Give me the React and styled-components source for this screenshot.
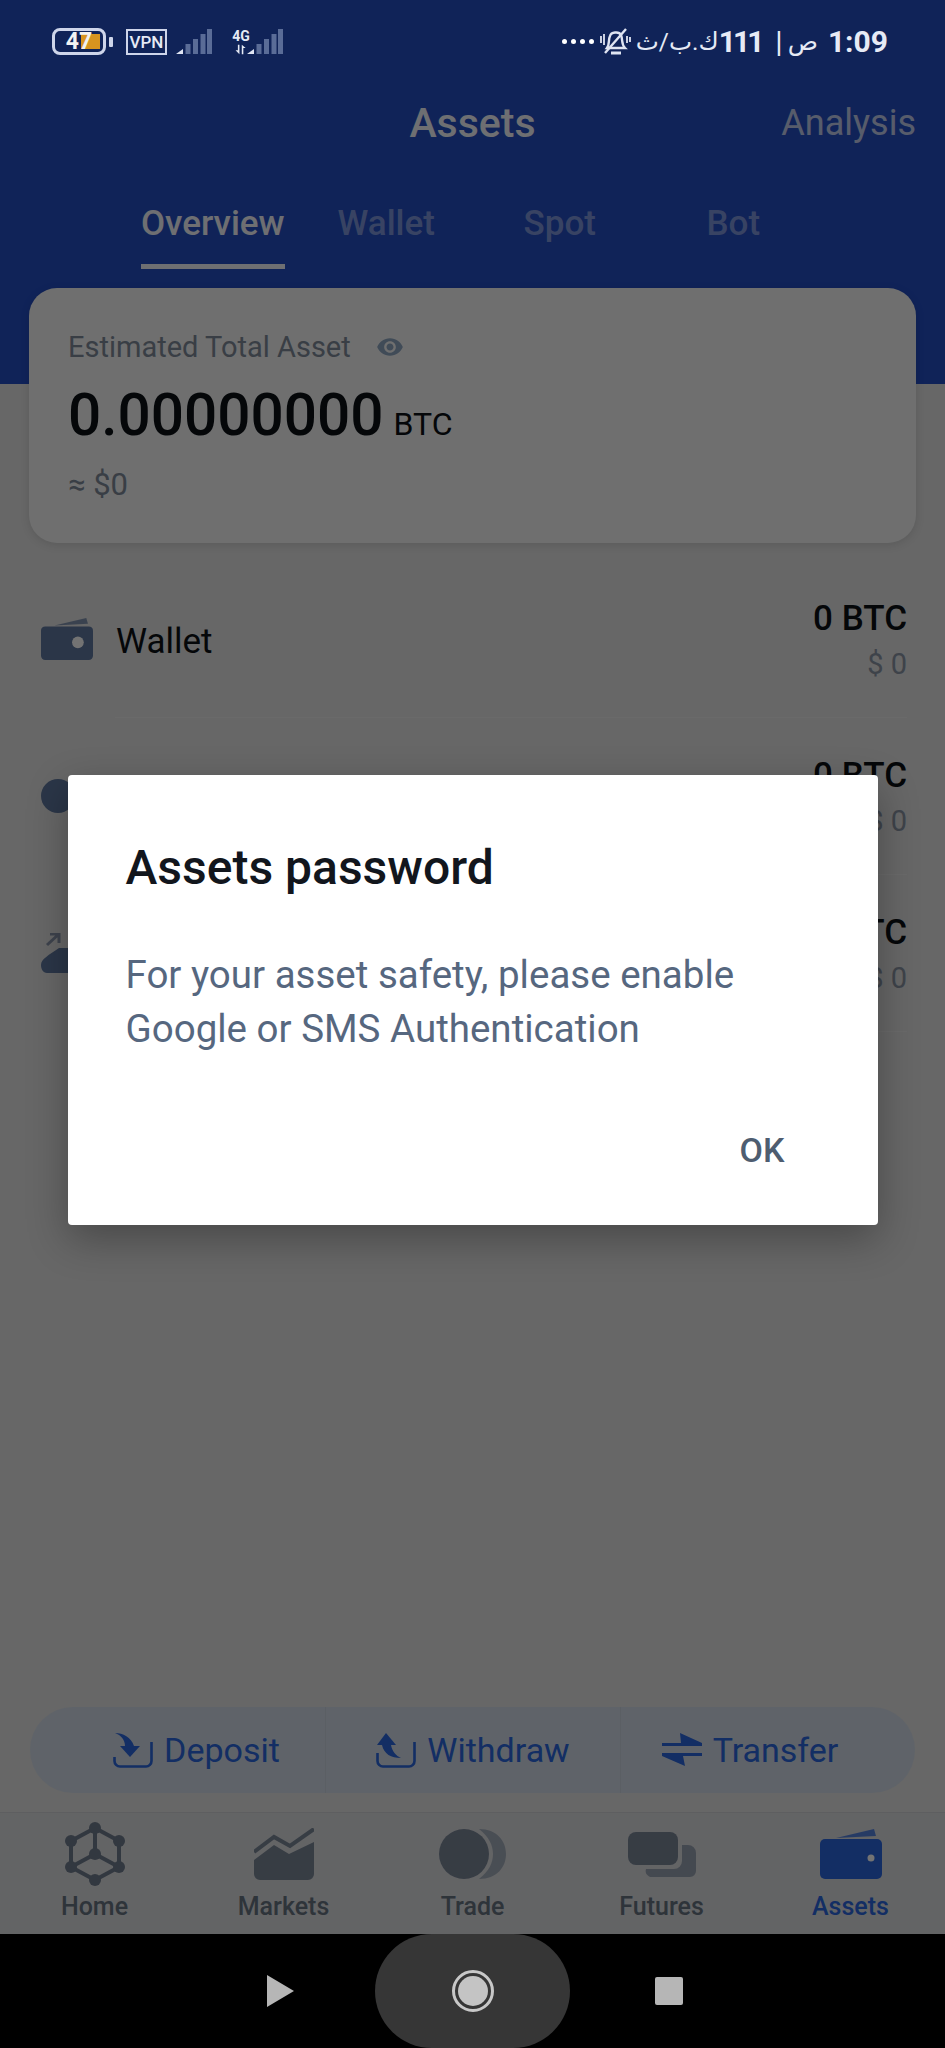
import styled, { createGlobalStyle } from 'styled-components'

const GlobalStyle = createGlobalStyle`
html, body {
    margin: 0;
    padding: 0;
    background: #000;
}
* {
    box-sizing: border-box;
}
body {
    font-family: Roboto, "Noto Sans", "DejaVu Sans", sans-serif;
}
`

const Page = styled.div`
width: 945px;
height: 2048px;
display: flex;
flex-direction: column;
overflow: hidden;
`

const Screen = styled.div`
position: relative;
height: 1934px;
display: flex;
flex-direction: column;
background: #e4e4e4;
`

const Header = styled.header`
height: 384px;
background: #244ec4;
padding: 28px 30px 0 52px;
`

const StatusBar = styled.div`
position: relative;
z-index: 2;
height: 27px;
display: flex;
justify-content: space-between;
align-items: center;
color: #e6eaf5;
`

const StatusLeft = styled.div`
display: flex;
align-items: center;
`

const StatusRight = styled.div`
display: flex;
align-items: center;
margin-right: 27px;
`

const Battery = styled.div`
position: relative;
width: 54px;
height: 27px;
border: 3px solid #ced5ea;
border-radius: 8px;
display: flex;
justify-content: center;
align-items: center;
font-size: 23px;
font-weight: 700;
color: #f2f2f2;

span {
    position: relative;
}
`

const BatteryFill = styled.div`
position: absolute;
top: 3px;
bottom: 3px;
left: 26px;
right: 3px;
background: #d8941f;
`

const BatteryCap = styled.div`
width: 4px;
height: 10px;
margin: 0 13px 0 3px;
background: #ced5ea;
border-radius: 1px;
`

const VpnBox = styled.div`
width: 41px;
height: 26px;
border: 2px solid #ced5ea;
display: flex;
justify-content: center;
align-items: center;
font-size: 17px;
font-weight: 500;
margin-right: 9px;
`

const NetStack = styled.div`
width: 26px;
margin-left: 16px;
display: flex;
flex-direction: column;
align-items: center;
font-size: 14px;
font-weight: 700;
line-height: 15px;
`

const SecondSignal = styled.div`
display: flex;
margin-left: -7px;
`

const TimeText = styled.span`
font-size: ${props => props.$size || 30}px;
font-weight: ${props => (props.$bold ? 700 : 400)};
letter-spacing: ${props => props.$tight || 0}px;
line-height: 36px;
margin-left: ${props => props.$gap || 0}px;
`

const Dots = styled.div`
display: flex;
gap: 4px;
margin-right: 5px;
`

const Dot = styled.i`
width: 5px;
height: 5px;
border-radius: 50%;
background: #fff;
`

const TitleRow = styled.div`
height: 60px;
margin: 38px -30px 0 -52px;
display: grid;
grid-template-columns: 1fr auto 1fr;
align-items: center;
`

const Title = styled.h1`
grid-column: 2;
margin: 0;
font-size: 41px;
font-weight: 500;
color: #fff;
opacity: 0.95;
`

const Analysis = styled.span`
justify-self: end;
margin-right: 29px;
font-size: 36px;
color: #fff;
opacity: 0.72;
`

const Tabs = styled.nav`
display: grid;
grid-template-columns: repeat(4, 173.5px);
margin: 50px 0 0 74px;
`

const Tab = styled.div`
display: flex;
flex-direction: column;
align-items: center;
font-size: 35px;
font-weight: 500;
line-height: 42px;
color: ${props => (props.$active ? '#fff' : 'rgba(255,255,255,.42)')};
opacity: ${props => (props.$active ? 0.95 : 1)};

span {
    padding-bottom: 19px;
    border-bottom: ${props => (props.$active ? '5px solid #fff' : '5px solid transparent')};
}
`

const SummaryCard = styled.section`
position: relative;
height: 255px;
margin: -96px 29px 0;
padding: 41px 39px 0;
background: #f5f6f6;
border-radius: 28px;
box-shadow: 0 2px 10px rgba(0,0,0,.12);
`

const SummaryLabel = styled.div`
display: flex;
align-items: center;
gap: 25px;
font-size: 29px;
line-height: 36px;
color: #7f8b9a;
`

const TotalLine = styled.div`
display: flex;
align-items: baseline;
gap: 10px;
margin-top: 15px;
color: #0c1016;
font-size: 32px;
line-height: 70px;

b {
    font-size: 58.5px;
    font-weight: 500;
}
`

const Approx = styled.div`
margin-top: 8px;
font-size: 31px;
line-height: 36px;
color: #7f8b9a;
`

const Rows = styled.div`
margin-top: 18px;
padding: 0 38px 0 41px;
`

const AssetRow = styled.div`
height: 156px;
display: flex;
align-items: center;
position: relative;
`

const RowIcon = styled.div`
width: 75px;
display: flex;
`

const RowName = styled.span`
position: relative;
top: 2px;
font-size: 35px;
color: #0c1016;
`

const RowValues = styled.div`
margin-left: auto;
padding-top: 3px;
text-align: right;
`

const RowAmount = styled.div`
font-size: 35px;
font-weight: 500;
line-height: 40px;
color: #0c1016;
`

const RowUsd = styled.div`
margin-top: 6px;
font-size: 29px;
line-height: 38px;
color: #8b95a4;
`

const RowDivider = styled.div`
height: 1px;
margin-left: 74px;
background: #ececec;
`

const ActionBar = styled.div`
margin: auto 30px 19px;
height: 86px;
display: grid;
grid-template-columns: repeat(3, 1fr);
background: #d3dce8;
border-radius: 43px;
`

const ActionButton = styled.div`
display: flex;
align-items: center;
justify-content: center;
gap: 11px;
padding: 0 ${props => props.$padRight || 0}px 0 ${props => props.$padLeft || 0}px;
font-size: 34px;
color: #2a66dd;

& + & {
    border-left: 1px solid #c9d2de;
}
`

const TabBar = styled.nav`
height: 122px;
display: grid;
grid-template-columns: repeat(5, 1fr);
background: #dcdde0;
border-top: 1px solid #d0d1d4;
`

const TabItem = styled.div`
display: flex;
flex-direction: column;
align-items: center;
justify-content: flex-end;
padding-bottom: 12px;
font-size: 25px;
font-weight: 500;
line-height: 30px;
color: ${props => (props.$active ? '#2a66dd' : '#677382')};
`

const TabIcon = styled.div`
height: 70px;
margin-bottom: 3px;
display: flex;
align-items: center;
`

const Overlay = styled.div`
position: absolute;
inset: 0;
z-index: 1;
padding-top: 775px;
display: flex;
justify-content: center;
align-items: flex-start;
background: rgba(0,0,0,.55);
`

const Dialog = styled.div`
width: 810px;
height: 450px;
padding: 65px 58px 0;
display: flex;
flex-direction: column;
background: #fff;
border-radius: 4px;
box-shadow: 0 14px 40px rgba(0,0,0,.3);
`

const DialogTitle = styled.h2`
margin: 0;
font-size: 48px;
font-weight: 500;
line-height: 56px;
color: #12161d;
`

const DialogBody = styled.p`
margin: 52px 0 0;
font-size: 38.5px;
line-height: 54px;
color: #56677f;
`

const DialogAction = styled.div`
margin-top: auto;
margin-bottom: 55px;
align-self: flex-end;
margin-right: 35px;
font-size: 34px;
font-weight: 500;
line-height: 40px;
color: #4e5d70;
`

const NavBar = styled.div`
flex: 1;
display: flex;
align-items: center;
padding-left: 267px;
background: #000;
`

const HomePill = styled.div`
width: 195px;
height: 114px;
margin: 0 85px 0 81px;
display: flex;
justify-content: center;
align-items: center;
background: #363636;
border-radius: 57px;
`

const BackButton = styled.div`
width: 0;
height: 0;
border-left: 27px solid #b6b6b6;
border-top: 16px solid transparent;
border-bottom: 16px solid transparent;
`

const HomeRing = styled.div`
width: 42px;
height: 42px;
border: 3px solid #c8c8c8;
border-radius: 50%;
padding: 3px;

&::after {
    content: '';
    display: block;
    width: 100%;
    height: 100%;
    border-radius: 50%;
    background: #c4c4c4;
}
`

const RecentButton = styled.div`
width: 28px;
height: 28px;
background: #b6b6b6;
border-radius: 2px;
`

function SignalBars() {
    return (
        <svg width="36" height="26" viewBox="0 0 36 26">
            <path d="M0 25 L7 20 V25 Z" fill="#dfe4f2" />
            <g fill="#5a6c97">
                <rect x="9.5" y="15" width="5" height="10" />
                <rect x="17" y="10" width="5" height="15" />
                <rect x="24.5" y="5" width="5" height="20" />
                <rect x="31" y="0" width="5" height="25" />
            </g>
        </svg>
    )
}

function DataArrows() {
    return (
        <svg width="14" height="11" viewBox="0 0 18 12" fill="#e6eaf5">
            <path d="M5 0 H7 V12 L2 7 H5 Z" />
            <path d="M10 12 H12 V4 H15 L10 0 Z" />
        </svg>
    )
}

function MutedBell() {
    return (
        <svg width="32" height="28" viewBox="0 0 32 28" fill="none" stroke="#dfe4f2" strokeWidth="2.4">
            <path d="M8 20 C11 16 9 12 11 8 C12 4 20 3 22 7 C24 12 22 16 26 20 Z" />
            <path d="M12 25 H22" strokeWidth="3" />
            <path d="M27 1 L6 25" />
            <path d="M2 8 V15 M5 6 V17 M28 8 V15 M31 9 V14" strokeWidth="1.8" />
        </svg>
    )
}

function WalletIcon({ width = 52, color = '#60789f', holeX = 44, holeR = 7 }) {
    return (
        <svg width={width} viewBox="0 0 62 50">
            <path d="M16 9 L54 0 L56 7 Z" fill={color} opacity="0.75" />
            <rect x="0" y="10" width="62" height="40" rx="5" fill={color} />
            <circle cx={holeX} cy="29" r={holeR} fill="#fff" />
        </svg>
    )
}

function EyeIcon() {
    return (
        <svg width="28" height="28" viewBox="0 0 24 24" fill="#8fa6c2">
            <path d="M12 4.5C7 4.5 2.73 7.61 1 12c1.73 4.39 6 7.5 11 7.5s9.27-3.11 11-7.5c-1.73-4.39-6-7.5-11-7.5zM12 17c-2.76 0-5-2.24-5-5s2.24-5 5-5 5 2.24 5 5-2.24 5-5 5zm0-8c-1.66 0-3 1.34-3 3s1.34 3 3 3 3-1.34 3-3-1.34-3-3-3z" />
        </svg>
    )
}

function CloudIcon() {
    return (
        <svg width="52" height="40" viewBox="0 0 52 40" fill="none">
            <path d="M6 12 L18 1 M9 1 H18 V10" stroke="#8a96ac" strokeWidth="3" />
            <path d="M0 32 C0 26 8 22 18 15 L34 15 L52 32 V40 H6 C2 40 0 36 0 32 Z" fill="#60789f" />
        </svg>
    )
}

function DepositIcon() {
    return (
        <svg width="40" height="36" viewBox="0 0 40 36" fill="#2a66dd">
            <path d="M1.5 25 V29 a5.5 5.5 0 0 0 5.5 5.5 H33 a5.5 5.5 0 0 0 5.5 -5.5 V10" fill="none" stroke="#2a66dd" strokeWidth="2.6" />
            <path d="M2 1 C10 1 18 5 21 14 L12 14 C12 8 8 3 2 1 Z" />
            <path d="M7 14 H27 L17 25 Z" />
        </svg>
    )
}

function WithdrawIcon() {
    return (
        <svg width="40" height="36" viewBox="0 0 40 36" fill="#2a66dd">
            <path d="M1.5 21 V29 a5.5 5.5 0 0 0 5.5 5.5 H33 a5.5 5.5 0 0 0 5.5 -5.5 V10" fill="none" stroke="#2a66dd" strokeWidth="2.6" />
            <path d="M10 1 L20 13 H1 Z" />
            <path d="M6 13 H15 C16 19 20 24 25 26 C15 26 8 22 6 13 Z" />
        </svg>
    )
}

function TransferIcon() {
    return (
        <svg width="40" height="34" viewBox="0 0 40 34" fill="#2a66dd">
            <path d="M0 10 H19 L18 0 L40 10 V13 H0 Z" />
            <path d="M0 20 H40 V23 H21 L23 33 L0 23 Z" />
        </svg>
    )
}

function HomeIcon() {
    const nodes = [[30, 6], [6, 19], [54, 19], [6, 45], [54, 45], [30, 58], [30, 32]]
    return (
        <svg width="60" height="64" viewBox="0 0 60 64" fill="#6f7c8e" stroke="#6f7c8e">
            <path d="M30 6 L54 19 V45 L30 58 L6 45 V19 Z M30 6 V32 L6 45 M30 32 L54 45" fill="none" strokeWidth="4" />
            {nodes.map(([cx, cy]) => (
                <circle key={`${cx}-${cy}`} cx={cx} cy={cy} r="6" strokeWidth="0" />
            ))}
        </svg>
    )
}

function MarketsIcon() {
    return (
        <svg width="60" height="52" viewBox="0 0 60 52" fill="#7a8798">
            <path d="M0 32 L20 17 L35 26 L60 14 V46 a6 6 0 0 1 -6 6 H6 a6 6 0 0 1 -6 -6 Z" />
            <path d="M0 24 L20 9 L36 18 L60 1" fill="none" stroke="#7a8798" strokeWidth="4" />
        </svg>
    )
}

function TradeIcon({ height = 50, main = '#7a8798', side = '#a3adbb' }) {
    return (
        <svg height={height} viewBox="0 0 67 50">
            <circle cx="25" cy="25" r="25" fill={main} />
            <path d="M40 0 C58 0 67 12 67 25 C67 38 58 50 40 50 C50 42 54 34 54 25 C54 16 50 8 40 0 Z" fill={side} />
        </svg>
    )
}

function FuturesIcon() {
    return (
        <svg width="68" height="47" viewBox="0 0 68 47" fill="#7a8798">
            <rect x="0" y="1" width="50" height="33" rx="8" />
            <path d="M54 14 H60 a8 8 0 0 1 8 8 V40 a6 6 0 0 1 -6 6 H24 a6 6 0 0 1 -6 -8 H46 a8 8 0 0 0 8 -8 Z" fill="#97a2b2" />
        </svg>
    )
}

const assetRows = [
    { name: 'Wallet', Icon: WalletIcon },
    { name: 'Spot', Icon: () => <TradeIcon height={34} main="#60789f" side="#60789f" /> },
    { name: 'Bot', Icon: CloudIcon },
]

const bottomTabs = [
    { label: 'Home', Icon: HomeIcon },
    { label: 'Markets', Icon: MarketsIcon },
    { label: 'Trade', Icon: TradeIcon },
    { label: 'Futures', Icon: FuturesIcon },
    { label: 'Assets', Icon: () => <WalletIcon width={62} color="#2a66dd" holeX={51} holeR={3.5} />, active: true },
]

export default function App() {
    return (
        <Page>
            <GlobalStyle />
            <Screen>
                <Header>
                    <StatusBar>
                        <StatusLeft>
                            <Battery>
                                <BatteryFill />
                                <span>47</span>
                            </Battery>
                            <BatteryCap />
                            <VpnBox>VPN</VpnBox>
                            <SignalBars />
                            <NetStack>
                                4G
                                <DataArrows />
                            </NetStack>
                            <SecondSignal><SignalBars /></SecondSignal>
                        </StatusLeft>
                        <StatusRight>
                            <Dots>
                                <Dot /><Dot /><Dot /><Dot />
                            </Dots>
                            <MutedBell />
                            <TimeText $size={24.5} $gap={5}>ك.ب/ث</TimeText>
                            <TimeText $bold $tight={-3}>111</TimeText>
                            <TimeText $gap={14}>|</TimeText>
                            <TimeText $size={25} $gap={5}>ص</TimeText>
                            <TimeText $bold $gap={10}>1:09</TimeText>
                        </StatusRight>
                    </StatusBar>
                    <TitleRow>
                        <Title>Assets</Title>
                        <Analysis>Analysis</Analysis>
                    </TitleRow>
                    <Tabs>
                        <Tab $active><span>Overview</span></Tab>
                        <Tab><span>Wallet</span></Tab>
                        <Tab><span>Spot</span></Tab>
                        <Tab><span>Bot</span></Tab>
                    </Tabs>
                </Header>
                <SummaryCard>
                    <SummaryLabel>
                        Estimated Total Asset
                        <EyeIcon />
                    </SummaryLabel>
                    <TotalLine>
                        <b>0.00000000</b>
                        BTC
                    </TotalLine>
                    <Approx>≈ $0</Approx>
                </SummaryCard>
                <Rows>
                    {assetRows.map(row => (
                        <div key={row.name}>
                            <AssetRow>
                                <RowIcon><row.Icon /></RowIcon>
                                <RowName>{row.name}</RowName>
                                <RowValues>
                                    <RowAmount>0 BTC</RowAmount>
                                    <RowUsd>$ 0</RowUsd>
                                </RowValues>
                            </AssetRow>
                            <RowDivider />
                        </div>
                    ))}
                </Rows>
                <ActionBar>
                    <ActionButton $padLeft={38}><DepositIcon />Deposit</ActionButton>
                    <ActionButton><WithdrawIcon />Withdraw</ActionButton>
                    <ActionButton $padRight={36}><TransferIcon />Transfer</ActionButton>
                </ActionBar>
                <TabBar>
                    {bottomTabs.map(tab => (
                        <TabItem key={tab.label} $active={tab.active}>
                            <TabIcon><tab.Icon /></TabIcon>
                            {tab.label}
                        </TabItem>
                    ))}
                </TabBar>
                <Overlay>
                    <Dialog>
                        <DialogTitle>Assets password</DialogTitle>
                        <DialogBody>
                            For your asset safety, please enable<br />
                            Google or SMS Authentication
                        </DialogBody>
                        <DialogAction>OK</DialogAction>
                    </Dialog>
                </Overlay>
            </Screen>
            <NavBar>
                <BackButton />
                <HomePill><HomeRing /></HomePill>
                <RecentButton />
            </NavBar>
        </Page>
    )
}
